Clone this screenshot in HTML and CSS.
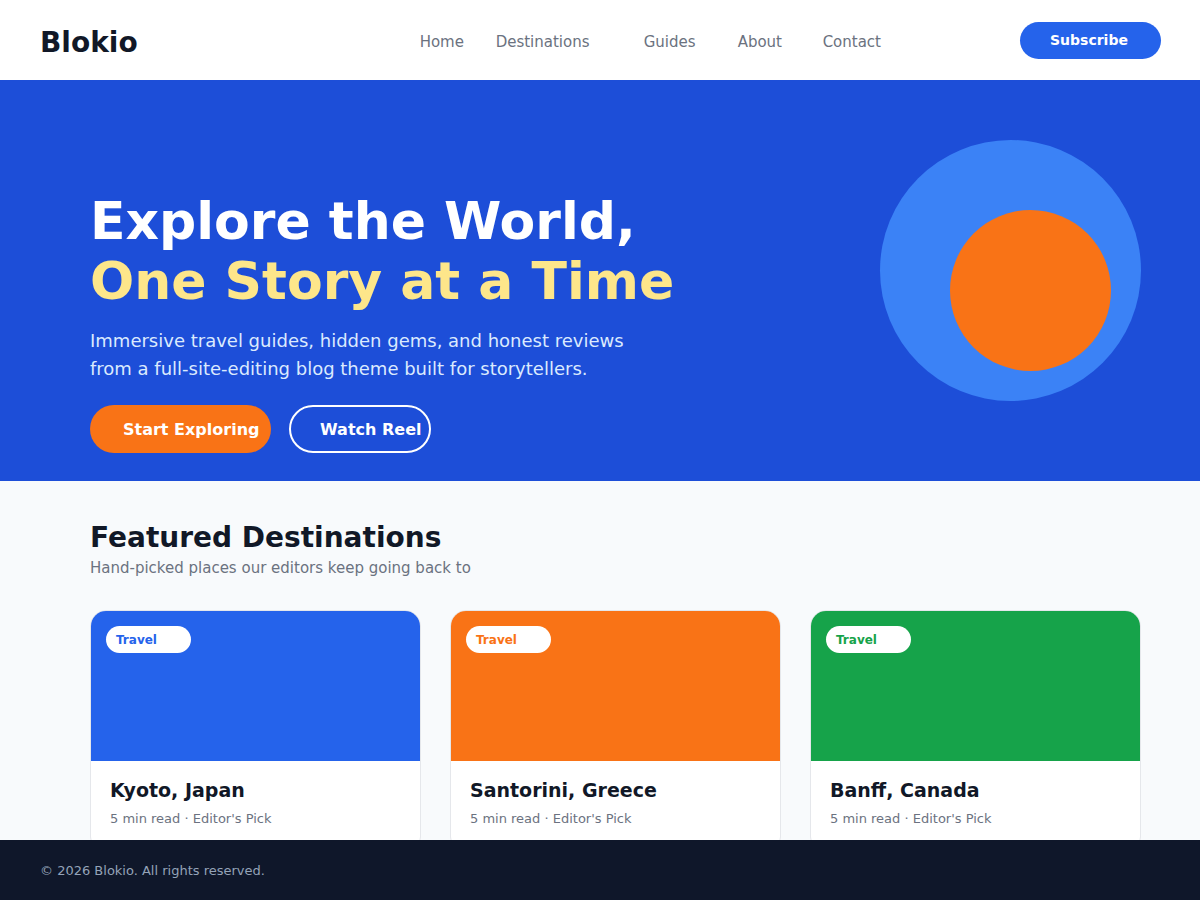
FILE: index.html
```html
<!DOCTYPE html>
<html lang="en">
<head>
<meta charset="utf-8">
<title>Blokio</title>
<link rel="stylesheet" href="styles.css">
</head>
<body>
<header class="site-header">
  <div class="logo">Blokio</div>
  <nav class="nav">
    <a class="nav-link w-home" href="#">Home</a>
    <a class="nav-link w-dest" href="#">Destinations</a>
    <a class="nav-link w-guides" href="#">Guides</a>
    <a class="nav-link w-about" href="#">About</a>
    <a class="nav-link" href="#">Contact</a>
  </nav>
  <a class="btn-subscribe" href="#">Subscribe</a>
</header>

<section class="hero">
  <div class="hero-text">
    <h1 class="hero-title">Explore the World,<br><span class="accent">One Story at a Time</span></h1>
    <p class="hero-lead">Immersive travel guides, hidden gems, and honest reviews<br>from a full-site-editing blog theme built for storytellers.</p>
    <div class="hero-actions">
      <a class="btn btn-primary" href="#">Start Exploring</a>
      <a class="btn btn-outline" href="#">Watch Reel</a>
    </div>
  </div>
  <div class="hero-art">
    <div class="sun"></div>
  </div>
</section>

<main class="featured">
  <h2 class="section-title">Featured Destinations</h2>
  <p class="section-sub">Hand-picked places our editors keep going back to</p>
  <div class="cards">
    <article class="card">
      <div class="card-media media-blue"><span class="badge text-blue">Travel</span></div>
      <div class="card-body">
        <h3 class="card-title">Kyoto, Japan</h3>
        <p class="card-meta">5 min read · Editor's Pick</p>
      </div>
    </article>
    <article class="card">
      <div class="card-media media-orange"><span class="badge text-orange">Travel</span></div>
      <div class="card-body">
        <h3 class="card-title">Santorini, Greece</h3>
        <p class="card-meta">5 min read · Editor's Pick</p>
      </div>
    </article>
    <article class="card">
      <div class="card-media media-green"><span class="badge text-green">Travel</span></div>
      <div class="card-body">
        <h3 class="card-title">Banff, Canada</h3>
        <p class="card-meta">5 min read · Editor's Pick</p>
      </div>
    </article>
  </div>
</main>

<footer class="site-footer">© 2026 Blokio. All rights reserved.</footer>
</body>
</html>
```

FILE: styles.css
```css
* { box-sizing: border-box; }

html, body { height: 100%; }

body {
  margin: 0;
  font-family: "DejaVu Sans", "Liberation Sans", sans-serif;
  display: flex;
  flex-direction: column;
  height: 100vh;
  overflow: hidden;
  background: #f8fafc;
}

a { text-decoration: none; }

/* Header */
.site-header {
  flex: 0 0 80px;
  height: 80px;
  background: #ffffff;
  display: flex;
  align-items: center;
  padding: 0 39px 0 40px;
}

.logo {
  font-size: 28px;
  font-weight: 700;
  color: #111827;
  line-height: 1;
  margin-top: 6px;
}

.nav {
  display: flex;
  margin-left: 282px;
  margin-top: 4px;
}

.nav-link {
  font-size: 15px;
  color: #6b7280;
  line-height: 20px;
}

.w-home { width: 76px; }
.w-dest { width: 148px; }
.w-guides { width: 94px; }
.w-about { width: 85px; }

.btn-subscribe {
  margin-left: auto;
  width: 141px;
  height: 37px;
  border-radius: 19px;
  background: #2563eb;
  color: #ffffff;
  font-size: 14px;
  font-weight: 700;
  display: flex;
  align-items: center;
  padding-left: 30px;
}

/* Hero */
.hero {
  flex: 0 0 401px;
  height: 401px;
  background: #1d4ed8;
  display: flex;
  justify-content: space-between;
  align-items: flex-start;
  padding: 60px 59px 0 90px;
}

.hero-text {
  margin-top: 51px;
}

.hero-title {
  margin: 0;
  font-size: 52px;
  line-height: 60px;
  font-weight: 700;
  color: #ffffff;
}

.accent { color: #fde68a; }

.hero-lead {
  margin: 16px 0 22px;
  font-size: 18px;
  line-height: 28px;
  color: #dbeafe;
}

.hero-actions {
  display: flex;
  gap: 18px;
}

.btn {
  height: 48px;
  border-radius: 24px;
  display: flex;
  align-items: center;
  font-size: 16px;
  font-weight: 700;
  color: #ffffff;
}

.btn-primary {
  width: 181px;
  background: #f97316;
  padding-left: 33px;
}

.btn-outline {
  width: 142px;
  border: 2px solid #ffffff;
  padding-left: 29px;
}

.hero-art {
  width: 261px;
  height: 261px;
  border-radius: 50%;
  background: #3b82f6;
  padding: 70px 0 0 70px;
}

.sun {
  width: 161px;
  height: 161px;
  border-radius: 50%;
  background: #f97316;
}

/* Featured */
.featured {
  flex: 1 1 auto;
  min-height: 0;
  overflow: hidden;
  padding: 40px 59px 0 90px;
  background: #f8fafc;
}

.section-title {
  margin: 0;
  font-size: 28px;
  line-height: 34px;
  font-weight: 700;
  color: #111827;
}

.section-sub {
  margin: 2px 0 0;
  font-size: 15px;
  line-height: 22px;
  color: #6b7280;
}

.cards {
  margin-top: 31px;
  display: grid;
  grid-template-columns: repeat(3, 331px);
  column-gap: 29px;
}

.card {
  background: #ffffff;
  border-radius: 16px;
  overflow: hidden;
  border: 1px solid #e5e7eb;
}

.card-media {
  height: 151px;
  margin: -1px -1px 0;
  padding: 16px;
}

.media-blue { background: #2563eb; }
.media-orange { background: #f97316; }
.media-green { background: #16a34a; }

.badge {
  display: inline-block;
  width: 85px;
  height: 27px;
  line-height: 29px;
  border-radius: 14px;
  background: #ffffff;
  font-size: 12px;
  font-weight: 700;
  padding-left: 10px;
}

.text-blue { color: #2563eb; }
.text-orange { color: #f97316; }
.text-green { color: #16a34a; }

.card-body {
  padding: 17px 19px 24px;
}

.card-title {
  margin: 0;
  font-size: 19px;
  line-height: 24px;
  font-weight: 700;
  color: #111827;
}

.card-meta {
  margin: 8px 0 0;
  font-size: 13px;
  line-height: 18px;
  color: #6b7280;
}

/* Footer */
.site-footer {
  flex: 0 0 60px;
  height: 60px;
  background: #0f172a;
  color: #94a3b8;
  font-size: 13px;
  display: flex;
  align-items: center;
  padding-left: 40px;
}
```
